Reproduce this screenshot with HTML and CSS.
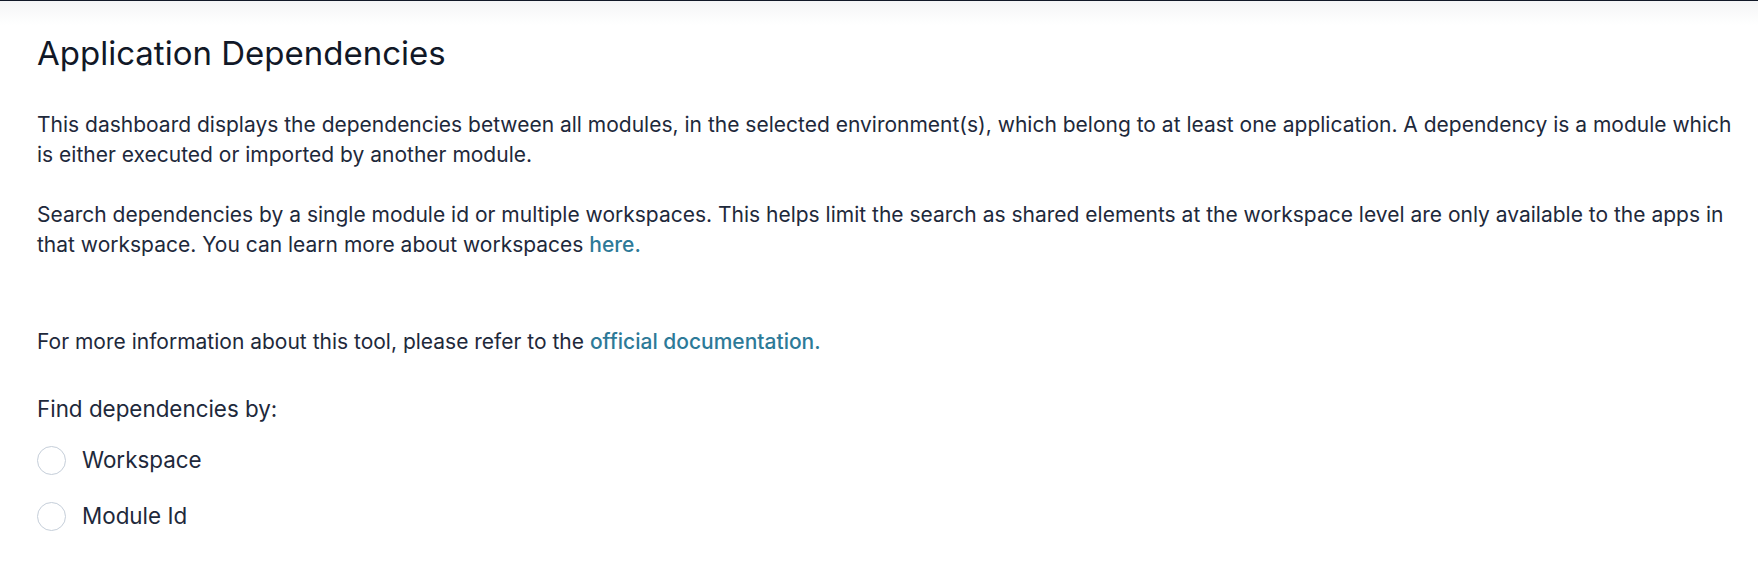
FILE: index.html
```html
<!DOCTYPE html>
<html lang="en">
<head>
<meta charset="utf-8">
<title>Application Dependencies</title>
<link rel="stylesheet" href="styles.css">
</head>
<body>
<div class="topbar"></div>
<main class="page">
  <h1 class="title">Application Dependencies</h1>
  <p class="para">This dashboard displays the dependencies between all modules, in the selected environment(s), which belong to at least one application. A dependency is a module which is either executed or imported by another module.</p>
  <p class="para">Search dependencies by a single module id or multiple workspaces. This helps limit the search as shared elements at the workspace level are only available to the apps in that workspace. You can learn more about workspaces <a class="link" href="#">here.</a></p>
  <p class="para para-spaced">For more information about this tool, please refer to the <a class="link" href="#">official documentation.</a></p>
  <div class="finder" role="radiogroup" aria-label="Find dependencies by">
    <div class="finder-label">Find dependencies by:</div>
    <div class="options">
      <label class="option"><input class="radio" type="radio" name="by" value="workspace"><span class="option-text">Workspace</span></label>
      <label class="option"><input class="radio" type="radio" name="by" value="module"><span class="option-text">Module Id</span></label>
    </div>
  </div>
</main>
</body>
</html>
```

FILE: styles.css
```css
html, body {
  margin: 0;
  padding: 0;
  background: #ffffff;
}

body {
  font-family: Inter, "Noto Sans", sans-serif;
  color: #1e293b;
  border-top: 1px solid #111827;
}

.topbar {
  height: 24px;
  background: linear-gradient(to bottom, #f4f5f6 0%, #ffffff 100%);
}

.page {
  padding: 8px 16px 0 37px;
}

.title {
  margin: 0;
  font-size: 33px;
  line-height: 40px;
  font-weight: 400;
  color: #111827;
}

.para {
  margin: 37px 0 0 0;
  font-size: 21px;
  line-height: 30px;
  font-weight: 400;
}

.para + .para {
  margin-top: 30px;
}

.para.para-spaced {
  margin-top: 67px;
}

.link {
  color: #2d7a98;
  font-weight: 500;
  text-decoration: none;
}

.finder {
  margin-top: 37px;
  display: flex;
  flex-direction: column;
  gap: 21px;
}

.finder-label {
  font-size: 22.4px;
  line-height: 30px;
}

.options {
  display: flex;
  flex-direction: column;
  gap: 26px;
}

.option {
  display: flex;
  align-items: center;
  gap: 16px;
  height: 30px;
  font-size: 22.4px;
  cursor: pointer;
}

.radio {
  appearance: none;
  -webkit-appearance: none;
  margin: 0;
  width: 29px;
  height: 29px;
  border: 1px solid #c5ced9;
  border-radius: 50%;
  background: #ffffff;
  flex: 0 0 auto;
}

.option-text {
  line-height: 30px;
}
```
